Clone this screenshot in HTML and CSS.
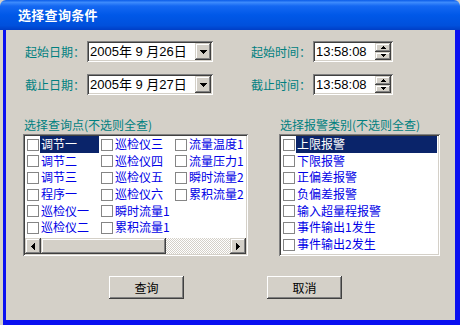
FILE: index.html
```html
<!DOCTYPE html>
<html lang="zh">
<head>
<meta charset="utf-8">
<title>选择查询条件</title>
<link rel="stylesheet" href="styles.css">
</head>
<body>
<div class="window">
  <div class="titlebar"><span class="title">选择查询条件</span></div>
  <div class="frame">
    <div class="content">
      <div class="field-row">
        <span class="lbl">起始日期：</span>
        <div class="input date"><span class="val">2005年 9 月26日</span><span class="dd-btn"><svg width="7" height="4" viewBox="0 0 7 4"><path d="M0 0h7v1h-1v1h-1v1h-1v1h-1v-1h-1v-1h-1v-1h-1z"/></svg></span></div>
        <span class="lbl lbl-time">起始时间：</span>
        <div class="input time"><span class="val">13:58:08</span><span class="spin"><span class="spin-btn"><svg width="5" height="3" viewBox="0 0 5 3"><path d="M2 0h1v1h1v1h1v1h-5v-1h1v-1h1z"/></svg></span><span class="spin-btn"><svg width="5" height="3" viewBox="0 0 5 3"><path d="M0 0h5v1h-1v1h-1v1h-1v-1h-1v-1h-1z"/></svg></span></span></div>
      </div>
      <div class="field-row row2">
        <span class="lbl">截止日期：</span>
        <div class="input date"><span class="val">2005年 9 月27日</span><span class="dd-btn"><svg width="7" height="4" viewBox="0 0 7 4"><path d="M0 0h7v1h-1v1h-1v1h-1v1h-1v-1h-1v-1h-1v-1h-1z"/></svg></span></div>
        <span class="lbl lbl-time">截止时间：</span>
        <div class="input time"><span class="val">13:58:08</span><span class="spin"><span class="spin-btn"><svg width="5" height="3" viewBox="0 0 5 3"><path d="M2 0h1v1h1v1h1v1h-5v-1h1v-1h1z"/></svg></span><span class="spin-btn"><svg width="5" height="3" viewBox="0 0 5 3"><path d="M0 0h5v1h-1v1h-1v1h-1v-1h-1v-1h-1z"/></svg></span></span></div>
      </div>

      <div class="groups">
        <div class="group group-left">
          <div class="group-label">选择查询点(不选则全查)</div>
          <div class="listbox">
            <div class="cols">
              <div class="item sel"><span class="cb"></span><span class="txt">调节一</span></div>
              <div class="item"><span class="cb"></span><span class="txt">调节二</span></div>
              <div class="item"><span class="cb"></span><span class="txt">调节三</span></div>
              <div class="item"><span class="cb"></span><span class="txt">程序一</span></div>
              <div class="item"><span class="cb"></span><span class="txt">巡检仪一</span></div>
              <div class="item"><span class="cb"></span><span class="txt">巡检仪二</span></div>
              <div class="item"><span class="cb"></span><span class="txt">巡检仪三</span></div>
              <div class="item"><span class="cb"></span><span class="txt">巡检仪四</span></div>
              <div class="item"><span class="cb"></span><span class="txt">巡检仪五</span></div>
              <div class="item"><span class="cb"></span><span class="txt">巡检仪六</span></div>
              <div class="item"><span class="cb"></span><span class="txt">瞬时流量1</span></div>
              <div class="item"><span class="cb"></span><span class="txt">累积流量1</span></div>
              <div class="item"><span class="cb"></span><span class="txt">流量温度1</span></div>
              <div class="item"><span class="cb"></span><span class="txt">流量压力1</span></div>
              <div class="item"><span class="cb"></span><span class="txt">瞬时流量2</span></div>
              <div class="item"><span class="cb"></span><span class="txt">累积流量2</span></div>
            </div>
            <div class="hscroll">
              <span class="sb-btn"><svg width="4" height="7" viewBox="0 0 4 7"><path d="M3 0h1v7h-1v-1h-1v-1h-1v-1h-1v-1h1v-1h1v-1h1z"/></svg></span>
              <span class="thumb"></span>
              <span class="track"></span>
              <span class="sb-btn"><svg width="4" height="7" viewBox="0 0 4 7"><path d="M0 0h1v1h1v1h1v1h1v1h-1v1h-1v1h-1v1h-1z"/></svg></span>
            </div>
          </div>
        </div>
        <div class="group group-right">
          <div class="group-label">选择报警类别(不选则全查)</div>
          <div class="listbox">
            <div class="rows">
              <div class="item sel"><span class="cb"></span><span class="txt">上限报警</span></div>
              <div class="item"><span class="cb"></span><span class="txt">下限报警</span></div>
              <div class="item"><span class="cb"></span><span class="txt">正偏差报警</span></div>
              <div class="item"><span class="cb"></span><span class="txt">负偏差报警</span></div>
              <div class="item"><span class="cb"></span><span class="txt">输入超量程报警</span></div>
              <div class="item"><span class="cb"></span><span class="txt">事件输出1发生</span></div>
              <div class="item"><span class="cb"></span><span class="txt">事件输出2发生</span></div>
            </div>
          </div>
        </div>
      </div>

      <div class="buttons">
        <button class="btn">查询</button>
        <button class="btn">取消</button>
      </div>
    </div>
  </div>
</div>
</body>
</html>
```

FILE: styles.css
```css
* { box-sizing: border-box; }
html, body { margin: 0; padding: 0; }
body {
  width: 460px;
  height: 325px;
  overflow: hidden;
  background: #d4d0c8;
  font-family: "Noto Sans CJK SC", "Liberation Sans", sans-serif;
  font-size: 12px;
}
.window {
  width: 460px;
  height: 325px;
  display: flex;
  flex-direction: column;
}
.titlebar {
  flex: none;
  height: 30px;
  display: flex;
  align-items: center;
  padding-left: 18px;
  border-radius: 6px 6px 0 0;
  background: linear-gradient(180deg, #0a5ce8 0%, #3d8bfc 8%, #1468f2 20%, #0058e8 50%, #0050dc 85%, #003ec6 100%);
}
.title {
  color: #fff;
  font-weight: bold;
  font-size: 13px;
  letter-spacing: 0.3px;
  line-height: 16px;
}
.frame {
  flex: 1;
  margin-left: 3px;
  border-left: 3px solid #0a10f0;
  border-right: 5px solid #0a10f0;
  border-bottom: 5px solid #0a10f0;
  background: #d4d0c8;
}
.content {
  padding-top: 11px;
}

/* field rows */
.field-row {
  display: flex;
  align-items: center;
  height: 21px;
  padding-left: 19px;
}
.row2 { margin-top: 12px; }
.lbl {
  width: 62px;
  color: #008080;
  font-size: 12px;
  line-height: 21px;
  white-space: nowrap;
}
.lbl-time { margin-left: 38px; }
.input {
  height: 21px;
  display: flex;
  align-items: center;
  padding: 2px;
  background: #fff;
  box-shadow: inset 1px 1px #808080, inset -1px -1px #ffffff, inset 2px 2px #404040, inset -2px -2px #d4d0c8;
}
.date { width: 126px; }
.time { width: 80px; }
.val {
  flex: 1;
  padding-left: 1px;
  font-family: "Liberation Sans", "Noto Sans CJK SC", sans-serif;
  font-size: 13px;
  line-height: 17px;
  color: #000;
  white-space: nowrap;
}
.raised {
  background: #d4d0c8;
}
.dd-btn, .spin-btn, .sb-btn, .thumb {
  background: #d4d0c8;
  box-shadow: inset -1px -1px #404040, inset 1px 1px #d4d0c8, inset -2px -2px #808080, inset 2px 2px #ffffff;
}
.dd-btn {
  flex: none;
  width: 16px;
  height: 17px;
  display: flex;
  align-items: center;
  justify-content: center;
}
.spin {
  flex: none;
  width: 16px;
  height: 17px;
  display: flex;
  flex-direction: column;
}
.spin-btn {
  flex: 1;
  display: flex;
  align-items: center;
  justify-content: center;
}
svg { display: block; fill: #000; }

/* groups */
.groups {
  display: flex;
  gap: 31px;
  margin-top: 21px;
  padding-left: 17px;
}
.group-left { width: 225px; }
.group-right { width: 161px; }
.group-label {
  height: 18px;
  line-height: 18px;
  padding-left: 1px;
  color: #008080;
  white-space: nowrap;
}
.listbox {
  height: 122px;
  padding: 2px;
  display: flex;
  flex-direction: column;
  background: #fff;
  box-shadow: inset 1px 1px #808080, inset -1px -1px #ffffff, inset 2px 2px #404040, inset -2px -2px #d4d0c8;
}
.cols {
  display: grid;
  grid-template-rows: repeat(6, 16.67px);
  grid-auto-flow: column;
  grid-auto-columns: 74px;
  overflow: hidden;
}
.rows {
  display: flex;
  flex-direction: column;
}
.item {
  display: flex;
  align-items: center;
  height: 16.67px;
}
.cb {
  flex: none;
  width: 12px;
  height: 12px;
  margin-left: 2px;
  margin-right: 1px;
  margin-top: 1px;
  border: 1px solid #858585;
  background: #fff;
}
.txt {
  height: 16.67px;
  line-height: 16.67px;
  padding-left: 1px;
  color: #0000e6;
  white-space: nowrap;
}
.sel .txt {
  background: #0a246a;
  color: #fff;
}
.cols .sel .txt { width: 60px; }
.rows .sel .txt { flex: 1; margin-right: 1px; }

/* horizontal scrollbar */
.hscroll {
  display: flex;
  height: 16px;
  margin-top: auto;
}
.sb-btn {
  flex: none;
  width: 16px;
  display: flex;
  align-items: center;
  justify-content: center;
}
.thumb {
  flex: none;
  width: 125px;
}
.track {
  flex: 1;
  background-color: #d4d0c8;
  background-image: repeating-conic-gradient(#ffffff 0 25%, #d4d0c8 0 50%);
  background-size: 2px 2px;
}

/* buttons */
.buttons {
  display: flex;
  gap: 83px;
  margin-top: 20px;
  padding-left: 103px;
}
.btn {
  width: 75px;
  height: 23px;
  padding: 0;
  border: 0;
  background: #d4d0c8;
  color: #000;
  font-family: "Noto Sans CJK SC", sans-serif;
  font-size: 12px;
  box-shadow: inset -1px -1px #404040, inset 1px 1px #ffffff, inset -2px -2px #808080, inset 2px 2px #d4d0c8;
}
```
